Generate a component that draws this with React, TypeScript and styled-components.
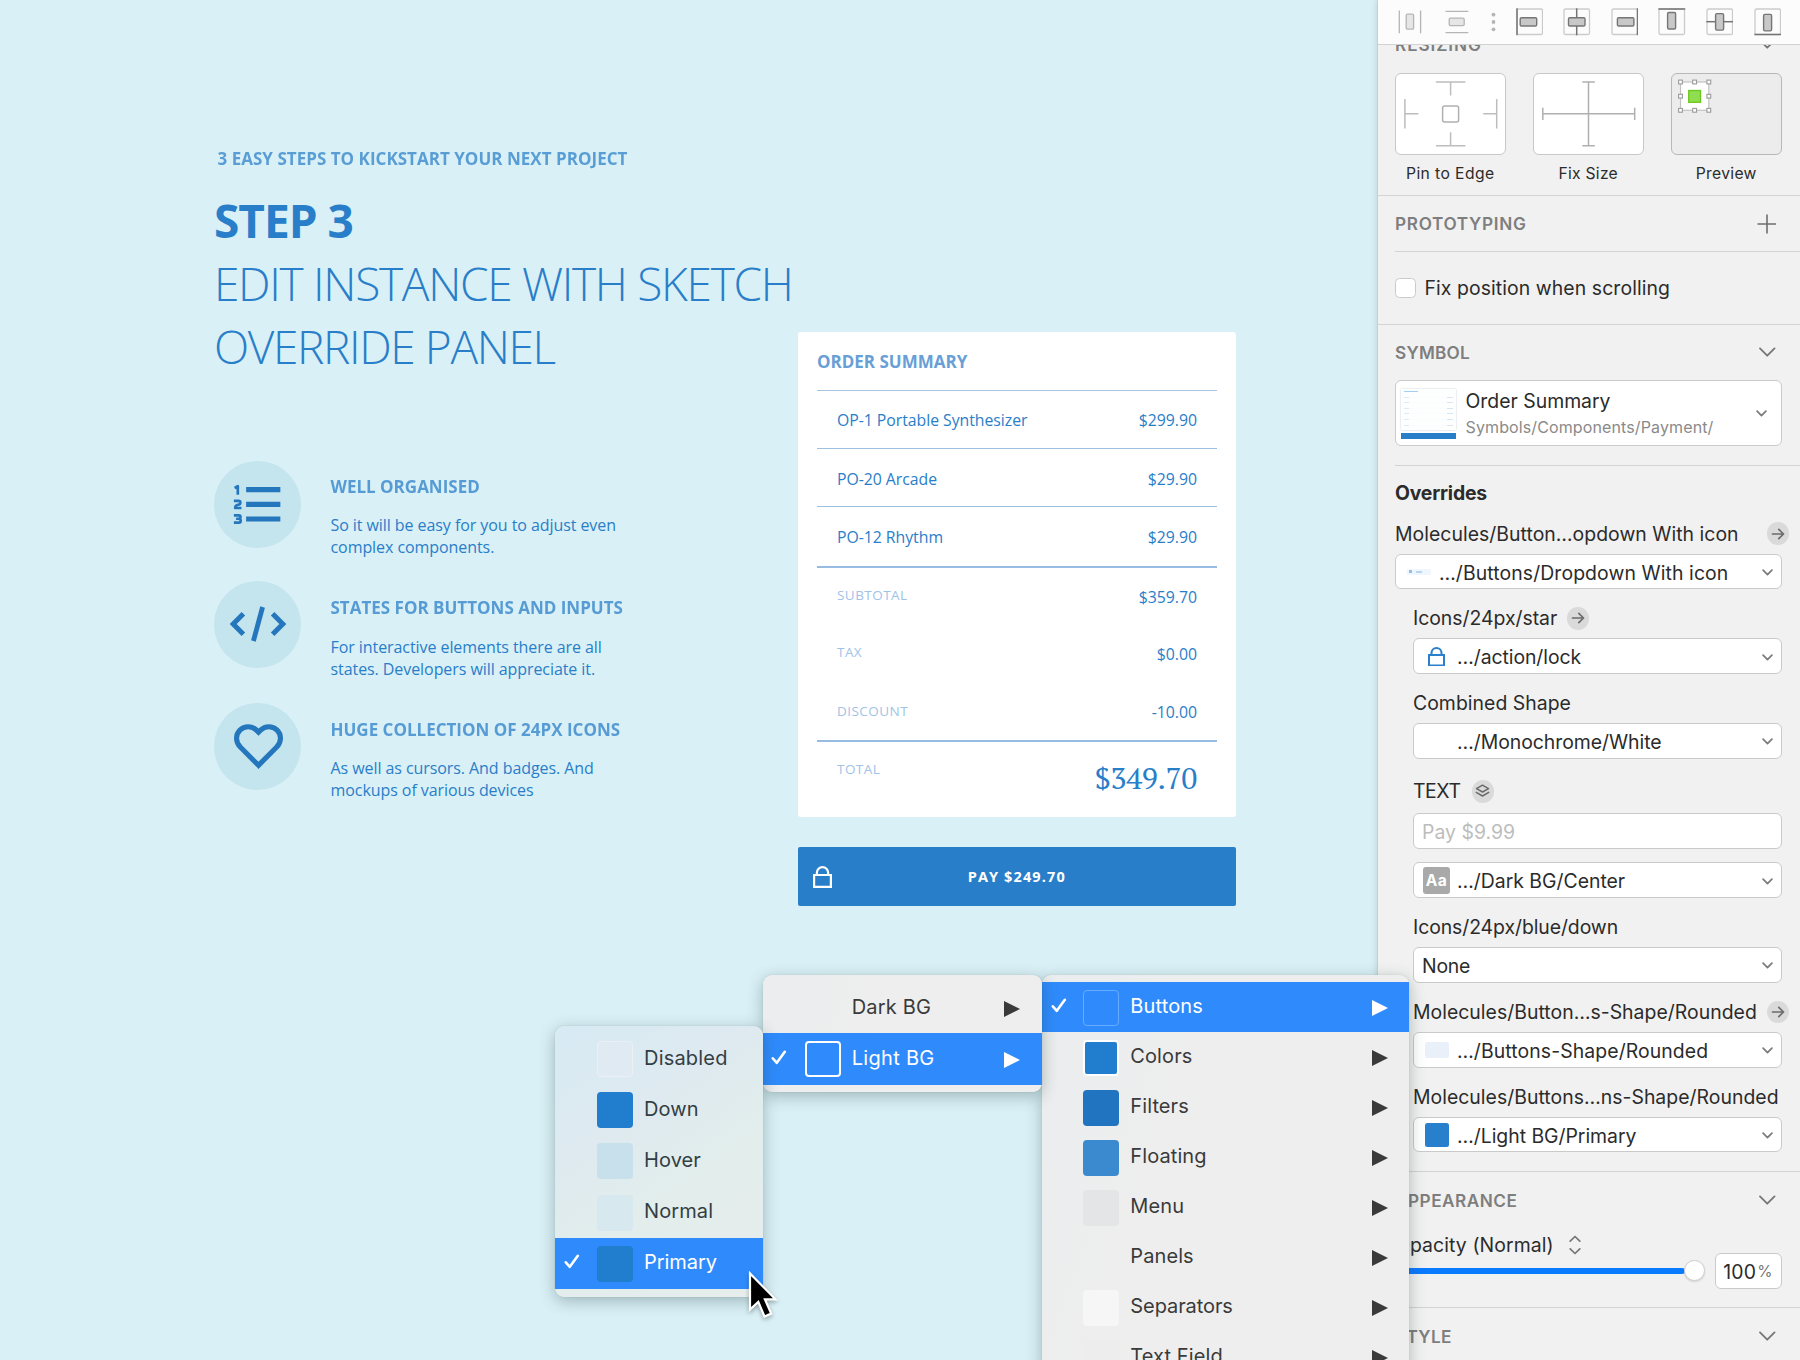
import React from 'react';
import styled, { createGlobalStyle, css } from 'styled-components';

const ui = '"Inter", "Liberation Sans", sans-serif';
const sans = '"Open Sans", "Noto Sans", sans-serif';
const blue = '#297ec9';

const Global = createGlobalStyle`
  *, *::before, *::after { box-sizing: border-box; }
  html, body { margin: 0; padding: 0; }
  body { width: 1800px; height: 1360px; overflow: hidden; background: #d9f0f6; }
  p, h1, h2, h3 { margin: 0; }
`;

const Screen = styled.div`
  position: relative;
  display: flex;
  width: 1800px;
  height: 1360px;
  overflow: hidden;
  background: #d9f0f6;
  font-family: ${sans};
`;

/* ---------- artboard ---------- */

const Canvas = styled.main`
  display: flex;
  flex: 1;
  min-width: 0;
  padding-left: 214px;
`;

const Intro = styled.section`
  width: 584px;
  flex: none;
  padding-top: 146px;
`;

const Kicker = styled.p`
  padding-left: 3.5px;
  font: 700 17px/25px ${sans};
  letter-spacing: 0.02px;
  color: ${blue};
  opacity: 0.72;
  white-space: nowrap;
`;

const Headline = styled.h1<{ $ls: number; $strong?: boolean }>`
  font-family: ${sans};
  font-size: 46px;
  line-height: 63px;
  font-weight: ${p => (p.$strong ? 700 : 300)};
  letter-spacing: ${p => p.$ls}px;
  color: ${blue};
  white-space: nowrap;
`;

const Headlines = styled.div`
  margin-top: 17.5px;
`;

const Features = styled.ul`
  margin: 83px 0 0;
  padding: 0;
  list-style: none;
`;

const Feature = styled.li`
  display: flex;
  gap: 29.5px;
  height: 121.6px;
`;

const Disc = styled.div<{ $lift: number }>`
  display: flex;
  align-items: center;
  justify-content: center;
  flex: none;
  width: 87px;
  height: 87px;
  margin-top: ${p => -p.$lift}px;
  padding-left: 1px;
  border-radius: 50%;
  background: #c4e4ee;
  color: #2577bd;
`;

const FeatureText = styled.div`
  padding-top: 14px;
  white-space: nowrap;
`;

const FeatureTitle = styled.h3`
  font: 700 17px/24px ${sans};
  color: ${blue};
  opacity: 0.74;
`;

const FeatureBody = styled.p`
  margin-top: 15.5px;
  font: 400 16px/22.2px ${sans};
  letter-spacing: -0.07px;
  color: ${blue};
`;

/* ---------- order card ---------- */

const Checkout = styled.section`
  width: 438px;
  flex: none;
  padding-top: 332px;
`;

const Card = styled.div`
  width: 437.5px;
  height: 485px;
  padding: 0 19px;
  border-radius: 3px;
  background: #fff;
`;

const CardTitle = styled.h2`
  height: 58.5px;
  border-bottom: 1.5px solid #a8c3e0;
  font: 700 17px/60px ${sans};
  letter-spacing: 0;
  color: #689fd6;
`;

const Line = styled.div<{ $h: number; $rule?: 'thin' | 'thick'; $drop?: number }>`
  display: flex;
  justify-content: space-between;
  align-items: center;
  height: ${p => p.$h}px;
  padding: ${p => p.$drop ?? 0}px 19.5px 0 20px;
  border-bottom: ${p => (p.$rule === 'thick' ? '2px solid #97bce1' : p.$rule === 'thin' ? '1px solid #9dc0e0' : '0')};
  font: 400 15.8px/22px ${sans};
  letter-spacing: -0.03px;
  color: ${blue};
  white-space: nowrap;
`;

const Caption = styled.span<{ $lift?: number }>`
  font-size: 13.5px;
  letter-spacing: 0.45px;
  color: #9fc3e7;
  margin-bottom: ${p => p.$lift ?? 4.5}px;
`;

const GrandTotal = styled.span`
  margin-bottom: 3px;
  font: 400 30px/36px "PT Serif", "Noto Serif", "Liberation Serif", serif;
  letter-spacing: -0.3px;
`;

const PayButton = styled.button`
  display: grid;
  grid-template-columns: 40px 1fr 40px;
  align-items: center;
  width: 437.5px;
  height: 59px;
  margin-top: 29.7px;
  padding: 1px 15px 0;
  border: 0;
  border-radius: 2px;
  background: ${blue};
  color: #fff;
`;

const PayLabel = styled.span`
  font: 700 14.5px/20px ${sans};
  letter-spacing: 1.12px;
  text-align: center;
`;

/* ---------- inspector ---------- */

const Inspector = styled.aside`
  width: 423.5px;
  flex: none;
  display: flex;
  flex-direction: column;
  border-left: 1px solid #cdcdcd;
  background: #f1f1f1;
  box-shadow: 0 0 6px rgba(60, 90, 100, 0.22);
  font-family: ${ui};
  color: #2b2b2b;
`;

const Toolbar = styled.div`
  display: flex;
  align-items: center;
  flex: none;
  height: 45px;
  padding: 0 19px 0 18px;
  justify-content: space-between;
  border-bottom: 1px solid #d2d2d2;
  background: #fcfcfc;
`;

const Scroll = styled.div`
  flex: 1;
  min-height: 0;
  overflow: hidden;
`;

const Section = styled.section`
  border-bottom: 1px solid #d3d3d3;
  padding-left: 17.5px;
`;

const Inset = styled.div`
  height: 1px;
  background: #d3d3d3;
`;

const Head = styled.div<{ $h: number; $lift?: number }>`
  display: flex;
  align-items: center;
  justify-content: space-between;
  height: ${p => p.$h}px;
  margin-top: ${p => p.$lift ?? 0}px;
  padding-right: 24.5px;
`;

const HeadLabel = styled.span<{ $ls: number }>`
  font-size: 17.2px;
  font-weight: 600;
  letter-spacing: ${p => p.$ls}px;
  color: #7e7e7e;
`;

const Modes = styled.div`
  display: flex;
  gap: 27.5px;
  padding-top: 15px;
  height: 137px;
`;

const Mode = styled.figure`
  margin: 0;
  width: 110.5px;
  text-align: center;
  line-height: 36px;
  white-space: nowrap;
`;

const ModeBox = styled.div<{ $muted?: boolean }>`
  height: 82px;
  border: 1.5px solid ${p => (p.$muted ? '#b8b8b8' : '#c8c8c8')};
  border-radius: 6px;
  background: ${p => (p.$muted ? '#ececec' : '#fff')};
  svg { display: block; }
`;

const T = styled.span<{ $ls?: number; $size?: number; $color?: string; $weight?: number }>`
  font-size: ${p => p.$size ?? 19.4}px;
  font-weight: ${p => p.$weight ?? 400};
  letter-spacing: ${p => p.$ls ?? 0.04}px;
  color: ${p => p.$color ?? 'inherit'};
  white-space: nowrap;
`;

const CheckRow = styled.label`
  display: flex;
  align-items: center;
  gap: 9px;
  height: 72px;
`;

const CheckBox = styled.i`
  width: 20.5px;
  height: 20.5px;
  border: 1.5px solid #cbcbcb;
  border-radius: 4.5px;
  background: #fff;
`;

const fieldBox = css`
  border: 1.5px solid #cacaca;
  border-radius: 6px;
  background: #fff;
`;

const SymbolSelect = styled.div`
  ${fieldBox}
  display: flex;
  align-items: center;
  width: 386.5px;
  height: 66px;
  margin-bottom: 19px;
  padding: 2px 13.5px 0 5px;
`;

const SymbolNames = styled.div`
  display: flex;
  flex-direction: column;
  flex: 1;
  margin-left: 9.5px;
  line-height: 26px;
`;

const Thumb = styled.div`
  display: flex;
  flex-direction: column;
  width: 55px;
  height: 50px;
  background: #fdfefe;
`;

const ThumbPage = styled.div`
  display: flex;
  flex-direction: column;
  gap: 4.6px;
  flex: 1;
  padding: 2px 3px 0;
  box-shadow: 0 0 1.5px rgba(60, 90, 120, 0.35);
`;

const ThumbLine = styled.i<{ $title?: boolean }>`
  display: flex;
  justify-content: space-between;
  height: 1px;
  background: ${p => (p.$title ? 'transparent' : '#fbfcfe')};
  &::before { content: ''; width: ${p => (p.$title ? 14 : 5)}px; height: 1px; background: ${p => (p.$title ? '#a5cdee' : '#dfebf7')}; }
  &::after { content: ''; width: ${p => (p.$title ? 0 : 6)}px; height: 1px; background: #d5e6f5; }
`;

const ThumbButton = styled.div`
  height: 6px;
  margin-top: 3px;
  background: ${blue};
`;

const Field = styled.div<{ $nested?: boolean; $top?: number }>`
  padding-left: ${p => (p.$nested ? 18 : 0)}px;
  margin-top: ${p => p.$top ?? 15.4}px;
`;

const FieldLabel = styled.div<{ $gap?: number }>`
  display: flex;
  align-items: center;
  height: 27px;
  margin-bottom: ${p => p.$gap ?? 6.7}px;
`;

const RoundBadge = styled.i<{ $ml: number }>`
  display: flex;
  align-items: center;
  justify-content: center;
  flex: none;
  width: 22.6px;
  height: 22.6px;
  margin-left: ${p => p.$ml}px;
  border-radius: 50%;
  background: #dadada;
  color: #6b6b6b;
`;

const Select = styled.div<{ $wide?: boolean; $top?: number }>`
  ${fieldBox}
  display: flex;
  align-items: center;
  width: ${p => (p.$wide ? 386.5 : 368.5)}px;
  height: 35.7px;
  margin-top: ${p => p.$top ?? 0}px;
  padding: 2px 8px 0 8px;
`;

const SelectIcon = styled.span`
  display: flex;
  align-items: center;
  justify-content: center;
  flex: none;
  width: 27px;
  margin: 0 7px 1.5px 1px;
`;

const Grow = styled.span`
  flex: 1;
  display: flex;
`;

const AaBadge = styled.span`
  width: 27px;
  height: 27px;
  border-radius: 3px;
  background: #a9a9a9;
  color: #fff;
  font: 700 15.5px/28px ${ui};
  letter-spacing: 0.4px;
  text-align: center;
`;

const Chip = styled.span<{ $c: string; $h: number }>`
  width: 24px;
  height: ${p => p.$h}px;
  border-radius: 2.5px;
  background: ${p => p.$c};
`;

const MiniButton = styled.span`
  display: flex;
  align-items: center;
  justify-content: space-between;
  width: 24px;
  height: 6px;
  padding: 0 2px;
  background: #f0f6fd;
  &::before { content: ''; width: 3px; height: 3px; background: #8fc0ea; }
  &::after { content: ''; width: 6px; height: 1.5px; margin-right: 7px; background: #b5d6f3; }
`;

const Opacity = styled.div`
  display: flex;
  height: 78.5px;
`;

const OpacityMain = styled.div`
  width: 320px;
`;

const OpacityLabel = styled.div`
  display: flex;
  align-items: center;
  gap: 15px;
  height: 33px;
`;

const Slider = styled.div`
  display: flex;
  align-items: center;
  height: 18px;
  width: 310px;
`;

const Track = styled.i`
  flex: 1;
  height: 6px;
  margin-right: -1px;
  border-radius: 3px;
  background: #0a7aff;
`;

const Knob = styled.i`
  width: 21px;
  height: 21px;
  border: 1px solid #cfcfcf;
  border-radius: 50%;
  background: #fff;
  box-shadow: 0 1px 2px rgba(0, 0, 0, 0.14);
`;

const Percent = styled.div`
  ${fieldBox}
  display: flex;
  align-items: center;
  justify-content: flex-end;
  gap: 1px;
  width: 66.5px;
  height: 36px;
  margin-top: 24px;
  padding: 2px 8px 0 0;
`;

/* ---------- pop-up menus ---------- */

const Menu = styled.div<{ $x: number; $y: number; $w: number; $h: number; $z: number; $tint?: boolean }>`
  position: absolute;
  left: ${p => p.$x}px;
  top: ${p => p.$y}px;
  z-index: ${p => p.$z};
  width: ${p => p.$w}px;
  height: ${p => p.$h}px;
  padding-top: 7px;
  border-radius: 9px;
  background: ${p => (p.$tint ? 'linear-gradient(145deg, #d8eaf3 5%, #dfeaf0 35%, #e2edec 60%, #e7eeec 100%)' : 'linear-gradient(110deg, #ebedee, #eeeeee 40%)')};
  box-shadow: 0 0 1px rgba(0, 0, 0, 0.25), 0 4px 16px rgba(30, 60, 60, 0.32);
  font-family: ${ui};
  color: ${p => (p.$tint ? '#333e43' : '#3a3a3a')};
`;

const Item = styled.div<{ $h: number; $on?: boolean }>`
  display: flex;
  align-items: center;
  height: ${p => p.$h}px;
  padding-right: 21.5px;
  background: ${p => (p.$on ? '#2f8bfc' : 'transparent')};
  color: ${p => (p.$on ? '#fff' : 'inherit')};
`;

const Tick = styled.span<{ $w: number }>`
  display: flex;
  width: ${p => p.$w}px;
  padding: 0 0 3px 8.5px;
  flex: none;
`;

const Swatch = styled.span<{ $c?: string; $line?: string; $bold?: boolean }>`
  flex: none;
  width: 36px;
  height: 36px;
  margin: 1px 11px 0 0;
  border: ${p => (p.$line ? (p.$bold ? 2 : 1.5) : 0)}px solid ${p => p.$line ?? 'transparent'};
  border-radius: 4px;
  background: ${p => p.$c ?? 'transparent'};
`;

const ItemText = styled.span<{ $ls?: number; $rise?: number }>`
  flex: 1;
  font-size: 20px;
  font-weight: 400;
  letter-spacing: ${p => p.$ls ?? 0.1}px;
  line-height: 24px;
  margin-bottom: ${p => p.$rise ?? 3}px;
  white-space: nowrap;
`;

const Arrow = styled.i<{ $off: number }>`
  margin-top: ${p => p.$off}px;
  border-left: 16px solid currentColor;
  border-top: 8.5px solid transparent;
  border-bottom: 8.5px solid transparent;
`;

const Pointer = styled.svg`
  position: absolute;
  left: 746px;
  top: 1269px;
  z-index: 9;
  filter: drop-shadow(0 2px 2px rgba(0, 0, 0, 0.3));
`;

/* ---------- drawings ---------- */

const Chevron = ({ big }: { big?: boolean }) =>
  big ? (
    <svg width="16.5" height="10.7" viewBox="0 0 17 11" fill="none" stroke="#757575" strokeWidth="1.8" strokeLinecap="round" strokeLinejoin="round">
      <path d="M1 1.500 8.500 9 16 1.500" />
    </svg>
  ) : (
    <svg width="11" height="7.4" viewBox="0 0 12 8" fill="none" stroke="#7c7c7c" strokeWidth="1.9" strokeLinecap="round" strokeLinejoin="round">
      <path d="M1.200 1.300 6 6.100 10.800 1.300" />
    </svg>
  );

const ArrowGlyph = () => (
  <svg width="14" height="12" viewBox="0 0 14 12" fill="none" stroke="currentColor" strokeWidth="1.7" strokeLinecap="round" strokeLinejoin="round">
    <path d="M1.500 6h11M7.800 1.300 12.500 6l-4.700 4.700" />
  </svg>
);

const LayersGlyph = () => (
  <svg width="15" height="14" viewBox="0 0 15 14" fill="none" stroke="currentColor" strokeWidth="1.5" strokeLinejoin="round" strokeLinecap="round">
    <path d="M7.500 1.200 13.500 4.600 7.500 8 1.500 4.600zM1.300 8.400l6.200 3.600 6.200-3.600" />
  </svg>
);

const LockGlyph = ({ size, stroke, color }: { size: number; stroke: number; color: string }) => (
  <svg width={size} height={size * 1.16} viewBox="0 0 19 22" fill="none" stroke={color} strokeWidth={stroke}>
    <path d="M1.100 9h16.800v11.800H1.100z" />
    <path d="M3.900 9V6.600a5.600 5.400 0 0 1 11.200 0V9" />
  </svg>
);

const AlignIcon = ({ kind }: { kind: string }) => {
  const dark = '#757575';
  const pale = '#cbcbcb';
  const fill = '#c8c8c8';
  const soft = '#b5b5b5';
  const wide = (x: number) => <rect x={x} y="9.8" width="16.5" height="8.2" rx="1.3" fill={fill} stroke={dark} strokeWidth="1.4" />;
  const tall = (y: number) => <rect x="9.6" y={y} width="8" height="16.5" rx="1.3" fill={fill} stroke={dark} strokeWidth="1.4" />;
  const frame = <rect x="1" y="1" width="25.5" height="25.5" rx="1.5" fill="none" stroke={pale} strokeWidth="1.3" />;
  return (
    <svg width="27.5" height="27.5" viewBox="0 0 27.5 27.5">
      {kind === 'dh' && <g stroke={soft} strokeWidth="1.3" fill="#e6e6e6"><path d="M3.300 2.500v22.800M24.600 2.500v22.800" /><rect x="10.2" y="6.2" width="7.4" height="15" rx="1.3" /></g>}
      {kind === 'dv' && <g stroke={soft} strokeWidth="1.3" fill="#e6e6e6"><path d="M2.500 3.300h22.800M2.500 24.600h22.800" /><rect x="6.2" y="10.2" width="15" height="7.4" rx="1.3" /></g>}
      {kind === 'l' && <>{frame}<path d="M1 .3v27" stroke={dark} strokeWidth="1.5" />{wide(4.2)}</>}
      {kind === 'c' && <>{frame}<path d="M13.700 .3v27" stroke={dark} strokeWidth="1.5" />{wide(5.5)}</>}
      {kind === 'r' && <>{frame}<path d="M26.500 .3v27" stroke={dark} strokeWidth="1.5" />{wide(6.4)}</>}
      {kind === 't' && <>{frame}<path d="M.3 1h27" stroke={dark} strokeWidth="1.5" />{tall(4.5)}</>}
      {kind === 'm' && <>{frame}<path d="M.3 13.700h27" stroke={dark} strokeWidth="1.5" />{tall(5.6)}</>}
      {kind === 'b' && <>{frame}<path d="M.3 26.500h27" stroke={dark} strokeWidth="1.5" />{tall(6.4)}</>}
    </svg>
  );
};

const DotsIcon = () => (
  <svg width="5" height="20" viewBox="0 0 5 20" fill="#b5b5b5">
    <circle cx="2.5" cy="2.7" r="1.9" /><circle cx="2.5" cy="10" r="1.9" /><circle cx="2.5" cy="17.3" r="1.9" />
  </svg>
);

const PinDrawing = () => (
  <svg width="108" height="80" viewBox="0 0 108 80" fill="none" stroke="#bdbdbd" strokeWidth="1.5">
    <path d="M39.900 8h29.500M54.600 8v13.500M39.900 71.700h29.500M54.600 71.700v-13.500M8.900 25v29.500M8.900 39.800h13.500M100.700 25v29.500M100.700 39.800h-13.500" />
    <rect x="46.6" y="31.9" width="16" height="16" rx="2" stroke="#b0b0b0" />
  </svg>
);

const FixDrawing = () => (
  <svg width="108" height="80" viewBox="0 0 108 80" fill="none" stroke="#b0b0b0" strokeWidth="1.5">
    <path d="M48.300 8h12.500M54.500 8v63.700M48.300 71.700h12.500M8.800 33.700v12.200M8.800 39.800h91.900M100.700 33.700v12.200" />
  </svg>
);

const PreviewDrawing = () => (
  <svg width="108" height="80" viewBox="0 0 108 80">
    <rect x="8.5" y="8" width="28.3" height="28.3" fill="#fff" stroke="#c2c2c2" strokeWidth="1.2" />
    <rect x="16.7" y="16.5" width="11.8" height="11.8" fill="#8ede4f" stroke="#6cc820" strokeWidth="1.3" />
    {[[8.5, 8], [22.6, 8], [36.8, 8], [8.5, 22.2], [36.8, 22.2], [8.5, 36.3], [22.6, 36.3], [36.8, 36.3]].map(([x, y]) => (
      <rect key={`${x}-${y}`} x={x - 1.9} y={y - 1.9} width="3.8" height="3.8" fill="#fff" stroke="#9a9a9a" strokeWidth="1.1" />
    ))}
  </svg>
);

const ListIcon = () => (
  <svg width="58.7" height="58.7" viewBox="0 0 24 24" fill="none" stroke="currentColor">
    <path d="M7 6h14M7 12h14M7 18h14" strokeWidth="2.1" />
    <path d="M2.300 5.300 3.600 4.600V8.100M2 10.600h1.900c1 0 1 1.300.1 1.500l-.9.3c-.6.2-.6.500-.6 1.100H5.100M2 16.500h2.100c.8 0 .8 1.400 0 1.400H2.900M4.100 17.900c.9 0 .9 1.600 0 1.600H2" strokeWidth="1.1" strokeLinejoin="round" />
  </svg>
);

const CodeIcon = () => (
  <svg width="58" height="36" viewBox="0 0 58 36" fill="none" stroke="currentColor" strokeWidth="5">
    <path d="M14.400 7.800 4.200 18l10.200 10.200M43.600 7.800 53.800 18 43.600 28.200" />
    <path d="M33.600 1 24.400 35" strokeWidth="4.8" />
  </svg>
);

const HeartIcon = () => (
  <svg width="49" height="45" viewBox="0 0 48 44" fill="none" stroke="currentColor" strokeWidth="5">
    <path d="M24 40.400 6.400 22.800C1.200 17.600 1.400 10.400 5.800 6 10.400 1.400 17.600 1.600 22 6l2 2 2-2c4.400-4.400 11.600-4.600 16.200 0 4.400 4.400 4.600 11.600-.6 16.800z" />
  </svg>
);

const TickGlyph = () => (
  <svg width="16" height="15" viewBox="0 0 16 15" fill="none" stroke="currentColor" strokeWidth="2.6" strokeLinecap="round" strokeLinejoin="round">
    <path d="M1.800 8.300 5.800 12.800 13.800 1.800" />
  </svg>
);

/* ---------- data ---------- */

const features = [
  { icon: <ListIcon />, title: 'WELL ORGANISED', lift: 0, body: ['So it will be easy for you to adjust even', 'complex components.'] },
  { icon: <CodeIcon />, title: 'STATES FOR BUTTONS AND INPUTS', lift: 1.6, body: ['For interactive elements there are all', 'states. Developers will appreciate it.'] },
  { icon: <HeartIcon />, title: 'HUGE COLLECTION OF 24PX ICONS', lift: 1.2, body: ['As well as cursors. And badges. And', 'mockups of various devices'] },
];

const states = [
  { label: 'Disabled', line: '#ecf0f4', c: '#dfeaf2', ls: 0.2 },
  { label: 'Down', c: '#217dce' },
  { label: 'Hover', c: '#c8dfec' },
  { label: 'Normal', c: '#d7e8ee' },
  { label: 'Primary', c: '#217dcd', on: true, ls: -0.05 },
];

const groups = [
  { label: 'Buttons', line: '#66abfd', on: true, ls: 0.15 },
  { label: 'Colors', c: '#217dcd', line: '#fbfdff', bold: true },
  { label: 'Filters', c: '#2074c0' },
  { label: 'Floating', c: '#3b8ad0' },
  { label: 'Menu', c: '#e4e5e7' },
  { label: 'Panels' },
  { label: 'Separators', c: '#f6f6f6', ls: -0.08 },
  { label: 'Text Field', c: '#ededed' },
];

export default function App() {
  return (
    <>
      <Global />
      <Screen>
        <Canvas>
          <Intro>
            <Kicker>3 EASY STEPS TO KICKSTART YOUR NEXT PROJECT</Kicker>
            <Headlines>
              <Headline $strong $ls={-1}>STEP 3</Headline>
              <Headline $ls={-1.3}>EDIT INSTANCE WITH SKETCH</Headline>
              <Headline $ls={-1.37}>OVERRIDE PANEL</Headline>
            </Headlines>
            <Features>
              {features.map(f => (
                <Feature key={f.title}>
                  <Disc $lift={f.lift}>{f.icon}</Disc>
                  <FeatureText>
                    <FeatureTitle>{f.title}</FeatureTitle>
                    <FeatureBody>{f.body[0]}<br />{f.body[1]}</FeatureBody>
                  </FeatureText>
                </Feature>
              ))}
            </Features>
          </Intro>
          <Checkout>
            <Card>
              <CardTitle>ORDER SUMMARY</CardTitle>
              <Line $h={58.5} $rule="thin" $drop={1.5}><span>OP-1 Portable Synthesizer</span><span>$299.90</span></Line>
              <Line $h={58} $rule="thin" $drop={3}><span>PO-20 Arcade</span><span>$29.90</span></Line>
              <Line $h={61} $rule="thick" $drop={1}><span>PO-12 Rhythm</span><span>$29.90</span></Line>
              <Line $h={58}><Caption>SUBTOTAL</Caption><span>$359.70</span></Line>
              <Line $h={56}><Caption>TAX</Caption><span>$0.00</span></Line>
              <Line $h={60} $rule="thick" $drop={2}><Caption $lift={3}>DISCOUNT</Caption><span>-10.00</span></Line>
              <Line $h={75}><Caption $lift={21}>TOTAL</Caption><GrandTotal>$349.70</GrandTotal></Line>
            </Card>
            <PayButton>
              <LockGlyph size={19} stroke={2.2} color="#fff" />
              <PayLabel>PAY $249.70</PayLabel>
            </PayButton>
          </Checkout>
        </Canvas>

        <Inspector>
          <Toolbar>
            <AlignIcon kind="dh" /><AlignIcon kind="dv" /><DotsIcon />
            <AlignIcon kind="l" /><AlignIcon kind="c" /><AlignIcon kind="r" />
            <AlignIcon kind="t" /><AlignIcon kind="m" /><AlignIcon kind="b" />
          </Toolbar>
          <Scroll>
            <Section>
              <Head $h={28} $lift={-15}><HeadLabel $ls={0.92}>RESIZING</HeadLabel><Chevron big /></Head>
              <Modes>
                <Mode><ModeBox><PinDrawing /></ModeBox><T $size={15.7} $ls={0.4}>Pin to Edge</T></Mode>
                <Mode><ModeBox><FixDrawing /></ModeBox><T $size={15.7} $ls={0.25}>Fix Size</T></Mode>
                <Mode><ModeBox $muted><PreviewDrawing /></ModeBox><T $size={15.7} $ls={0.3}>Preview</T></Mode>
              </Modes>
            </Section>
            <Section>
              <Head $h={55}>
                <HeadLabel $ls={0.68}>PROTOTYPING</HeadLabel>
                <svg width="20" height="20" viewBox="0 0 20 20" stroke="#6e6e6e" strokeWidth="1.6"><path d="M11 .5v19M1.500 10h18.500" /></svg>
              </Head>
              <Inset />
              <CheckRow><CheckBox /><T $ls={0.09}>Fix position when scrolling</T></CheckRow>
            </Section>
            <Section>
              <Head $h={55}><HeadLabel $ls={0.23}>SYMBOL</HeadLabel><Chevron big /></Head>
              <SymbolSelect>
                <Thumb>
                  <ThumbPage>
                    <ThumbLine $title /><ThumbLine /><ThumbLine /><ThumbLine /><ThumbLine /><ThumbLine /><ThumbLine />
                  </ThumbPage>
                  <ThumbButton />
                </Thumb>
                <SymbolNames>
                  <T $ls={0}>Order Summary</T>
                  <T $size={16} $ls={0.12} $color="#8a8a8a">Symbols/Components/Payment/</T>
                </SymbolNames>
                <Chevron />
              </SymbolSelect>
              <Inset />
              <Head $h={54}><T $weight={700} $ls={-0.2}>Overrides</T></Head>
              <Field $top={0}>
                <FieldLabel><T $ls={0.04}>Molecules/Button…opdown With icon</T><RoundBadge $ml={28}><ArrowGlyph /></RoundBadge></FieldLabel>
                <Select $wide><SelectIcon><MiniButton /></SelectIcon><Grow><T $ls={0.1}>…/Buttons/Dropdown With icon</T></Grow><Chevron /></Select>
              </Field>
              <Field $nested>
                <FieldLabel><T $ls={-0.02}>Icons/24px/star</T><RoundBadge $ml={9.5}><ArrowGlyph /></RoundBadge></FieldLabel>
                <Select><SelectIcon><LockGlyph size={17} stroke={2.3} color="#2c7fca" /></SelectIcon><Grow><T $ls={-0.06}>…/action/lock</T></Grow><Chevron /></Select>
              </Field>
              <Field $nested>
                <FieldLabel><T>Combined Shape</T></FieldLabel>
                <Select><SelectIcon /><Grow><T $ls={-0.03}>…/Monochrome/White</T></Grow><Chevron /></Select>
              </Field>
              <Field $nested $top={19}>
                <FieldLabel $gap={8.3}><T $ls={-0.4}>TEXT</T><RoundBadge $ml={11}><LayersGlyph /></RoundBadge></FieldLabel>
                <Select><T $color="#bdbdbd">Pay $9.99</T></Select>
                <Select $top={13.6}><SelectIcon><AaBadge>Aa</AaBadge></SelectIcon><Grow><T $ls={0}>…/Dark BG/Center</T></Grow><Chevron /></Select>
              </Field>
              <Field $nested>
                <FieldLabel><T $ls={-0.07}>Icons/24px/blue/down</T></FieldLabel>
                <Select><Grow><T $ls={-0.2}>None</T></Grow><Chevron /></Select>
              </Field>
              <Field $nested>
                <FieldLabel><T $ls={0.03}>Molecules/Button…s-Shape/Rounded</T><RoundBadge $ml={10}><ArrowGlyph /></RoundBadge></FieldLabel>
                <Select><SelectIcon><Chip $c="#e9f0f9" $h={16} /></SelectIcon><Grow><T $ls={0.1}>…/Buttons-Shape/Rounded</T></Grow><Chevron /></Select>
              </Field>
              <Field $nested>
                <FieldLabel><T $ls={0.03}>Molecules/Buttons…ns-Shape/Rounded</T></FieldLabel>
                <Select><SelectIcon><Chip $c="#287fcb" $h={24} /></SelectIcon><Grow><T $ls={-0.02}>…/Light BG/Primary</T></Grow><Chevron /></Select>
              </Field>
              <Head $h={18.3} />
            </Section>
            <Section>
              <Head $h={57}><HeadLabel $ls={0.5}>APPEARANCE</HeadLabel><Chevron big /></Head>
              <Opacity>
                <OpacityMain>
                  <OpacityLabel>
                    <T $ls={0.1}>Opacity (Normal)</T>
                    <svg width="12" height="20" viewBox="0 0 12 20" fill="none" stroke="#767676" strokeWidth="1.7" strokeLinecap="round" strokeLinejoin="round"><path d="M1.200 6.200 6 1.500l4.800 4.700M1.200 13.800 6 18.500l4.800-4.700" /></svg>
                  </OpacityLabel>
                  <Slider><Track /><Knob /></Slider>
                </OpacityMain>
                <Percent><T $ls={0.2}>100</T><T $size={15.5} $color="#777">%</T></Percent>
              </Opacity>
            </Section>
            <Section>
              <Head $h={56}><HeadLabel $ls={0.3}>STYLE</HeadLabel><Chevron big /></Head>
            </Section>
          </Scroll>
        </Inspector>

        <Menu $x={1042.3} $y={975} $w={367} $h={400} $z={3}>
          {groups.map(g => (
            <Item key={g.label} $h={50.1} $on={g.on}>
              <Tick $w={41}>{g.on && <TickGlyph />}</Tick>
              <Swatch $c={g.c} $line={g.line} $bold={g.bold} />
              <ItemText $ls={g.ls}>{g.label}</ItemText>
              <Arrow $off={1} />
            </Item>
          ))}
        </Menu>
        <Menu $x={762.7} $y={975} $w={279.3} $h={117} $z={4}>
          <Item $h={51.3}><Tick $w={42} /><Swatch /><ItemText $ls={0.18} $rise={2}>Dark BG</ItemText><Arrow $off={2} /></Item>
          <Item $h={51.3} $on><Tick $w={42}><TickGlyph /></Tick><Swatch $line="#fff" $bold /><ItemText $ls={0.3} $rise={2}>Light BG</ItemText><Arrow $off={2} /></Item>
        </Menu>
        <Menu $x={555} $y={1026} $w={207.7} $h={271} $z={5} $tint>
          {states.map(s => (
            <Item key={s.label} $h={51.2} $on={s.on}>
              <Tick $w={42}>{s.on && <TickGlyph />}</Tick>
              <Swatch $c={s.c} $line={s.line} />
              <ItemText $ls={s.ls} $rise={2}>{s.label}</ItemText>
            </Item>
          ))}
        </Menu>
        <Pointer width="34" height="52" viewBox="0 0 34 52">
          <path d="M4 4.500v36l8.300-7.600 6.200 14.600 6.700-2.900-6.300-14.300h10.600z" fill="#000" stroke="#fff" strokeWidth="2.2" />
        </Pointer>
      </Screen>
    </>
  );
}
